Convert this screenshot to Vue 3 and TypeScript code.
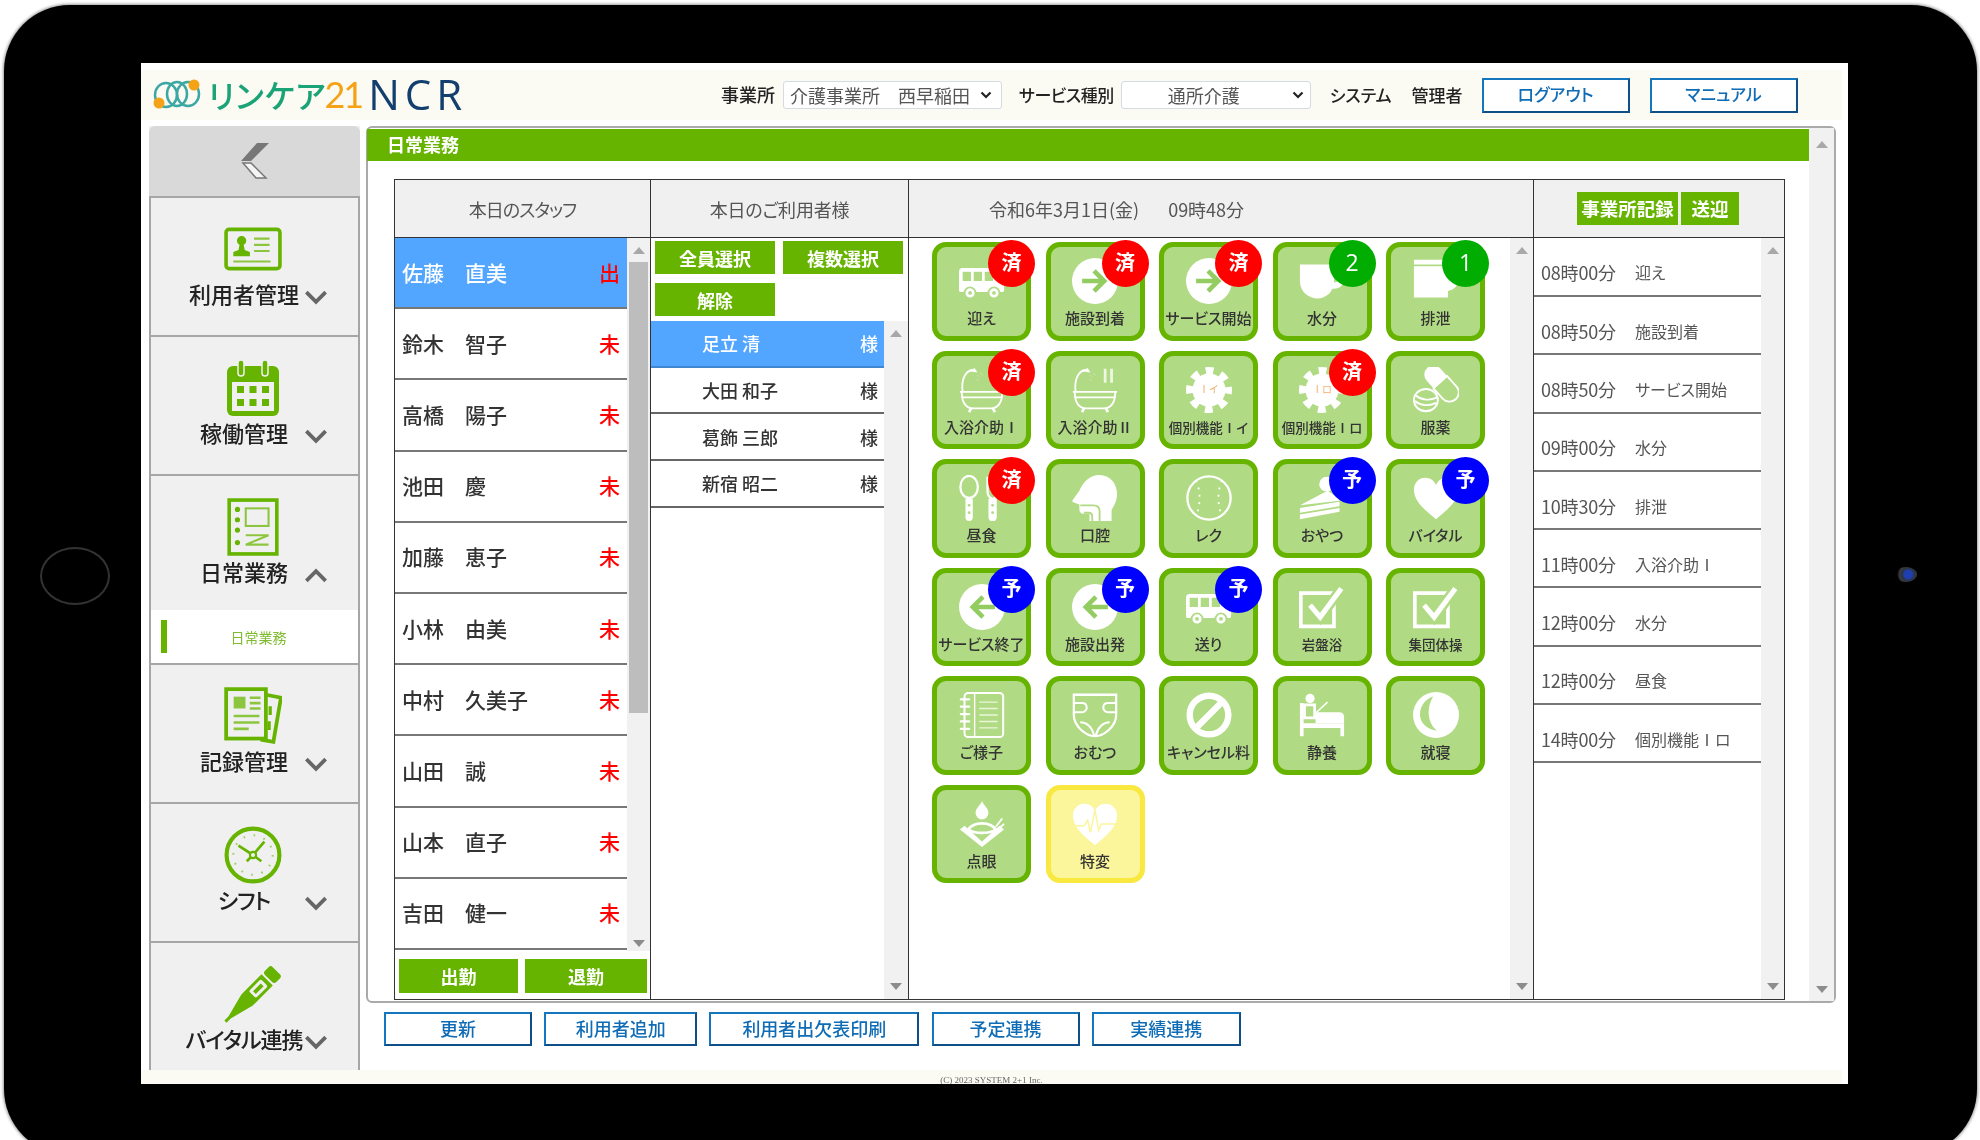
<script setup lang="ts">
type BadgeKind = 'done' | 'count' | 'plan'

interface Tile {
  label: string
  icon: string
  badge?: string
  kind?: BadgeKind
  small?: boolean
  alert?: boolean
  tag?: string
}

const navItems = [
  { label: '利用者管理', icon: 'nav-card' },
  { label: '稼働管理', icon: 'nav-cal' },
  { label: '日常業務', icon: 'nav-daily', open: true },
  { label: '記録管理', icon: 'nav-rec' },
  { label: 'シフト', icon: 'nav-clock', tight: true },
  { label: 'バイタル連携', icon: 'nav-temp', tight: true }
]

const staff = [
  { name: '佐藤　直美', mark: '出', active: true },
  { name: '鈴木　智子', mark: '未' },
  { name: '高橋　陽子', mark: '未' },
  { name: '池田　慶', mark: '未' },
  { name: '加藤　恵子', mark: '未' },
  { name: '小林　由美', mark: '未' },
  { name: '中村　久美子', mark: '未' },
  { name: '山田　誠', mark: '未' },
  { name: '山本　直子', mark: '未' },
  { name: '吉田　健一', mark: '未' }
]

const users = ['足立 清', '大田 和子', '葛飾 三郎', '新宿 昭二']

const tiles: Tile[] = [
  { label: '迎え', icon: 'bus', badge: '済', kind: 'done' },
  { label: '施設到着', icon: 'arrow-r', badge: '済', kind: 'done' },
  { label: 'サービス開始', icon: 'arrow-r', badge: '済', kind: 'done' },
  { label: '水分', icon: 'cup', badge: '2', kind: 'count' },
  { label: '排泄', icon: 'toilet', badge: '1', kind: 'count' },
  { label: '入浴介助Ⅰ', icon: 'bath', badge: '済', kind: 'done' },
  { label: '入浴介助Ⅱ', icon: 'bath2' },
  { label: '個別機能Ⅰイ', icon: 'gear', small: true, tag: 'Ⅰイ' },
  { label: '個別機能Ⅰロ', icon: 'gear', badge: '済', kind: 'done', small: true, tag: 'Ⅰロ' },
  { label: '服薬', icon: 'pills' },
  { label: '昼食', icon: 'meal', badge: '済', kind: 'done' },
  { label: '口腔', icon: 'mouth' },
  { label: 'レク', icon: 'ball' },
  { label: 'おやつ', icon: 'cake', badge: '予', kind: 'plan' },
  { label: 'バイタル', icon: 'heart', badge: '予', kind: 'plan' },
  { label: 'サービス終了', icon: 'arrow-l', badge: '予', kind: 'plan' },
  { label: '施設出発', icon: 'arrow-l', badge: '予', kind: 'plan' },
  { label: '送り', icon: 'bus', badge: '予', kind: 'plan' },
  { label: '岩盤浴', icon: 'check', small: true },
  { label: '集団体操', icon: 'check', small: true },
  { label: 'ご様子', icon: 'note' },
  { label: 'おむつ', icon: 'diaper' },
  { label: 'キャンセル料', icon: 'cancel' },
  { label: '静養', icon: 'bed' },
  { label: '就寝', icon: 'moon' },
  { label: '点眼', icon: 'eye' },
  { label: '特変', icon: 'pulse', alert: true }
]

const timeline = [
  ['08時00分', '迎え'],
  ['08時50分', '施設到着'],
  ['08時50分', 'サービス開始'],
  ['09時00分', '水分'],
  ['10時30分', '排泄'],
  ['11時00分', '入浴介助Ⅰ'],
  ['12時00分', '水分'],
  ['12時00分', '昼食'],
  ['14時00分', '個別機能Ⅰロ']
]

const actions = [
  { label: '更新', width: 148 },
  { label: '利用者追加', width: 153 },
  { label: '利用者出欠表印刷', width: 210 },
  { label: '予定連携', width: 148 },
  { label: '実績連携', width: 149 }
]
</script>

<template>
  <div class="page">
    <svg class="defs" width="0" height="0" aria-hidden="true">
      <!-- side menu -->
      <symbol id="nav-card" viewBox="0 0 56 42">
        <rect x="2" y="2" width="52" height="38" rx="3" fill="none" stroke="#66b400" stroke-width="3.5" />
        <circle cx="17" cy="13" r="4.5" fill="#66b400" />
        <path d="M15 17h4l1 5 5 2v4H9v-4l5-2z" fill="#66b400" />
        <path d="M29 11h15M29 17h15M29 23h15M9 33h36" stroke="#8cc63f" stroke-width="2" />
      </symbol>
      <symbol id="nav-cal" viewBox="0 0 54 58">
        <rect x="1" y="7" width="52" height="50" rx="6" fill="#66b400" />
        <rect x="6" y="23" width="42" height="29" fill="#f0f0f0" />
        <rect x="12" y="1" width="6" height="16" rx="3" fill="#66b400" stroke="#f0f0f0" stroke-width="1.5" />
        <rect x="36" y="1" width="6" height="16" rx="3" fill="#66b400" stroke="#f0f0f0" stroke-width="1.5" />
        <g fill="#66b400">
          <rect x="11" y="27" width="7" height="7" /><rect x="23.5" y="27" width="7" height="7" /><rect x="36" y="27" width="7" height="7" />
          <rect x="11" y="40" width="7" height="7" /><rect x="23.5" y="40" width="7" height="7" /><rect x="36" y="40" width="7" height="7" />
        </g>
      </symbol>
      <symbol id="nav-daily" viewBox="0 0 50 56">
        <rect x="2" y="2" width="46" height="52" fill="none" stroke="#66b400" stroke-width="3.5" />
        <g fill="#66b400"><circle cx="10" cy="11" r="2.5" /><circle cx="10" cy="21" r="2.5" /><circle cx="10" cy="31" r="2.5" /><circle cx="10" cy="43" r="2.5" /></g>
        <rect x="18" y="10" width="22" height="17" fill="none" stroke="#8cc63f" stroke-width="2" />
        <path d="M18 36h22L18 45h22" fill="none" stroke="#8cc63f" stroke-width="2" />
      </symbol>
      <symbol id="nav-rec" viewBox="0 0 54 54">
        <path d="M38 7l15 3-7 41-12-2" fill="none" stroke="#66b400" stroke-width="3.5" />
        <rect x="2" y="2" width="37" height="46" fill="#f0f0f0" stroke="#66b400" stroke-width="3.5" />
        <path d="M9 9h11v11H9z" fill="#8cc63f" />
        <path d="M24 10h10M24 15h10M24 20h10M9 27h24M9 33h24M9 39h14" stroke="#8cc63f" stroke-width="2.4" />
        <path d="M43 18v8M42 32v8" stroke="#66b400" stroke-width="3" />
      </symbol>
      <symbol id="nav-clock" viewBox="0 0 56 56">
        <circle cx="28" cy="28" r="25.5" fill="none" stroke="#66b400" stroke-width="4" />
        <circle cx="28" cy="28" r="19" fill="none" stroke="#9ccf5c" stroke-width="2" stroke-dasharray="1.6 8.35" />
        <path d="M28 28L14 19M28 28l11-13M28 28l-6 6M28 28l8 6" stroke="#66b400" stroke-width="2.6" />
        <circle cx="28" cy="28" r="3" fill="#f0f0f0" stroke="#66b400" stroke-width="2" />
      </symbol>
      <symbol id="nav-temp" viewBox="0 0 58 58">
        <g transform="rotate(-45 29 29)">
          <path d="M-10 27.500h6L17 22c3-1 4-1 7-1h25v16H24c-3 0-4 0-7-1L-4 30.500h-6z" fill="#66b400" />
          <rect x="51" y="21" width="11" height="16" rx="3" fill="#66b400" />
          <rect x="28" y="24" width="17" height="10" rx="2" fill="#f0f0f0" />
          <rect x="31" y="27" width="11" height="4" fill="#66b400" />
        </g>
      </symbol>

      <!-- task tiles -->
      <symbol id="bus" viewBox="0 0 50 50">
        <path d="M4 11h28c6 0 11 9 15 14l2 3v7a2 2 0 0 1-2 2H2a2 2 0 0 1-2-2V15a4 4 0 0 1 4-4z" fill="#fff" />
        <g fill="#b0da83"><rect x="4" y="15" width="9" height="10" /><rect x="16" y="15" width="9" height="10" /><rect x="28" y="15" width="9" height="10" /></g>
        <circle cx="12" cy="38" r="6" fill="#fff" stroke="#b0da83" stroke-width="2" /><circle cx="12" cy="38" r="2" fill="#b0da83" />
        <circle cx="38" cy="38" r="6" fill="#fff" stroke="#b0da83" stroke-width="2" /><circle cx="38" cy="38" r="2" fill="#b0da83" />
      </symbol>
      <symbol id="arrow-r" viewBox="0 0 50 50">
        <circle cx="25" cy="25" r="25" fill="#fff" />
        <path d="M11 25h24M24 14l11 11-11 11" fill="none" stroke="#93cc60" stroke-width="5" />
      </symbol>
      <symbol id="arrow-l" viewBox="0 0 50 50">
        <circle cx="25" cy="25" r="25" fill="#fff" />
        <path d="M39 25H15M26 14L15 25l11 11" fill="none" stroke="#93cc60" stroke-width="5" />
      </symbol>
      <symbol id="cup" viewBox="0 0 50 50">
        <path d="M1 7h37v18c0 12-9 19-18 19S1 37 1 25z" fill="#fff" />
        <path d="M36 26c6 1 11-1 14-5l-3 8c-2 4-8 5-13 4z" fill="#fff" />
      </symbol>
      <symbol id="toilet" viewBox="0 0 50 50">
        <path d="M1 2h38v5H1zM1 9h38v13h11c0 8-5 12-12 14v7H1z" fill="#fff" />
      </symbol>
      <symbol id="bath" viewBox="0 0 50 50">
        <g fill="none" stroke="#fff" stroke-width="2">
          <path d="M4 27C2 14 7 4 15 3" />
          <path d="M1 27h48M3 33h44" />
          <path d="M3 27c0 14 6 18 13 18h18c7 0 13-4 13-18" />
          <path d="M13 45l-2 4M37 45l2 4" stroke-width="3" />
        </g>
        <path d="M12 5l5-4 3 5z" fill="#fff" />
        <path d="M20 9l3 3M23 7l3 2M19 13l3 3" stroke="#dff0cc" stroke-width="1" stroke-dasharray="1 1" />
      </symbol>
      <symbol id="bath2" viewBox="0 0 50 50">
        <use href="#bath" width="50" height="50" />
        <path d="M36 2v15M43 2v15" stroke="#eef7e2" stroke-width="3" />
      </symbol>
      <symbol id="gear" viewBox="0 0 50 50">
        <circle cx="25" cy="25" r="18" fill="#fff" />
        <circle cx="25" cy="25" r="21" fill="none" stroke="#fff" stroke-width="8" stroke-dasharray="8.500 7.993" stroke-dashoffset="4.250" />
      </symbol>
      <symbol id="pills" viewBox="0 0 50 50">
        <g transform="rotate(-42 31 18)">
          <path d="M21 5a10 10 0 0 1 20 0v11H21z" fill="#fff" />
          <path d="M21 16h20v15a10 10 0 0 1-20 0z" fill="none" stroke="#fff" stroke-width="2" />
        </g>
        <ellipse cx="14" cy="36" rx="13" ry="12" fill="#b0da83" stroke="#fff" stroke-width="2.200" />
        <path d="M3 31c6 5 16 6 23 2M2 37c6 5 16 6 23 2" fill="none" stroke="#fff" stroke-width="2" />
      </symbol>
      <symbol id="meal" viewBox="0 0 50 50">
        <ellipse cx="11" cy="13" rx="9.500" ry="12" fill="none" stroke="#fff" stroke-width="2.500" />
        <path d="M7 26h8v20a4 4 0 0 1-8 0z" fill="#fff" />
        <circle cx="11" cy="33" r="1.500" fill="#b0da83" /><circle cx="11" cy="41" r="1.500" fill="#b0da83" />
        <path d="M31 2v16c0 5 3 7 5 8h1c2-1 5-3 5-8V2" fill="none" stroke="#fff" stroke-width="2.500" />
        <path d="M32 26h9v20a4.500 4.500 0 0 1-9 0z" fill="#fff" />
        <circle cx="36.500" cy="33" r="1.500" fill="#b0da83" /><circle cx="36.500" cy="41" r="1.500" fill="#b0da83" />
      </symbol>
      <symbol id="mouth" viewBox="0 0 50 50">
        <path d="M30 0c11 0 19 9 19 21 0 7-3 12-6 17v12H19v-8h-7c-3 0-4-2-4-5v-5l-6-2c-2-1-2-2-1-3l7-10C12 8 19 0 30 0z" fill="#fff" />
        <path d="M9 33h14c5 0 7 2 7 6v11M13 41h5c3 0 4 2 4 4v5" fill="none" stroke="#b0da83" stroke-width="2" />
      </symbol>
      <symbol id="ball" viewBox="0 0 50 50">
        <circle cx="25" cy="25" r="23.500" fill="none" stroke="#fff" stroke-width="2.500" />
        <path d="M11 6c5 11 5 27 0 38M39 6c-5 11-5 27 0 38" fill="none" stroke="#fff" stroke-width="2" stroke-dasharray="2 6" />
      </symbol>
      <symbol id="cake" viewBox="0 0 50 50">
        <circle cx="30" cy="10" r="8" fill="#fff" />
        <path d="M1 33L31 17l14 9-1 2z" fill="#fff" />
        <path d="M1 36l43-7v5L1 41z" fill="#fff" />
        <path d="M1 43l43-7v4L1 48z" fill="#fff" />
      </symbol>
      <symbol id="heart" viewBox="0 0 50 50">
        <path d="M25 48C14 39 1 29 1 16 1 8 7 3 13 3c6 0 10 3 12 8 2-5 6-8 12-8 6 0 12 5 12 13 0 13-13 23-24 32z" fill="#fff" />
      </symbol>
      <symbol id="pulse" viewBox="0 0 50 50">
        <use href="#heart" width="50" height="50" />
        <path d="M0 27h13l4-6 3 13 5-24 4 22 3-7h18" fill="none" stroke="#fbf59b" stroke-width="1.600" />
      </symbol>
      <symbol id="check" viewBox="0 0 50 50">
        <path d="M2 10h36v36H2z" fill="none" stroke="#fff" stroke-width="4" />
        <path d="M12 23l11 13L46 5" fill="none" stroke="#b0da83" stroke-width="11" />
        <path d="M12 23l11 13L46 5" fill="none" stroke="#fff" stroke-width="5.500" />
      </symbol>
      <symbol id="note" viewBox="0 0 50 50">
        <rect x="6" y="1" width="42" height="48" rx="4" fill="none" stroke="#fff" stroke-width="2.200" />
        <path d="M17 2v46" stroke="#fff" stroke-width="1.500" />
        <path d="M22 11h20M22 18h20M22 25h20M22 32h20M22 39h20" stroke="#eaf6dc" stroke-width="1.500" />
        <path d="M2 8h9M2 16h9M2 24h9M2 32h9M2 40h9" stroke="#fff" stroke-width="2.500" stroke-linecap="round" />
      </symbol>
      <symbol id="diaper" viewBox="0 0 50 50">
        <path d="M2 3h46v22c0 12-13 23-23 23S2 37 2 25z" fill="none" stroke="#fff" stroke-width="2.500" />
        <path d="M2 12h9c4 0 5 3 5 5s-2 5-5 5H2M48 12h-9c-4 0-5 3-5 5s2 5 5 5h9" fill="none" stroke="#fff" stroke-width="2.200" />
        <path d="M9 33c7 0 13 5 15 14M41 33c-7 0-13 5-15 14" fill="none" stroke="#fff" stroke-width="2.200" />
      </symbol>
      <symbol id="cancel" viewBox="0 0 50 50">
        <circle cx="25" cy="25" r="21" fill="none" stroke="#fff" stroke-width="7" />
        <path d="M12 38L38 12" stroke="#fff" stroke-width="7" />
      </symbol>
      <symbol id="bed" viewBox="0 0 50 50">
        <circle cx="12" cy="7" r="5" fill="#fff" />
        <path d="M6 14h11v14H6z" fill="none" stroke="#fff" stroke-width="3" />
        <path d="M17 24l14-13" stroke="#fff" stroke-width="1.500" />
        <path d="M18 22h26c3 0 5 2 5 5v7H18z" fill="#fff" />
        <path d="M1 12h4v36H1zM5 34h44v14h-4v-9H5z" fill="#fff" />
      </symbol>
      <symbol id="moon" viewBox="0 0 50 50">
        <circle cx="25" cy="25" r="25" fill="#fff" />
        <path d="M22 5C12 8 6 18 8 28c2 8 9 13 18 14-10-8-12-24-4-37z" fill="#b0da83" />
      </symbol>
      <symbol id="eye" viewBox="0 0 50 50">
        <path d="M25 0c2 5 7 8 7 13a7 7 0 0 1-14 0c0-5 5-8 7-13z" fill="#fff" />
        <path d="M1 31l5-4 19 17 19-17 5 4-24 19z" fill="#fff" />
        <path d="M10 31c6-9 24-9 30 0-6 5-24 5-30 0z" fill="none" stroke="#fff" stroke-width="3" />
        <path d="M40 28l7-9M43 30l6-5" stroke="#fff" stroke-width="2" />
      </symbol>
    </svg>

    <div class="tablet">
      <span class="home"></span>
      <span class="camera"></span>

      <div class="screen">
        <header class="topbar">
          <div class="logo">
            <svg class="logo-mark" viewBox="0 0 48 30" width="48" height="30">
              <g fill="none" stroke="#3ba8a3" stroke-width="2.500">
                <ellipse cx="13" cy="16" rx="11" ry="12" />
                <ellipse cx="24" cy="15" rx="10" ry="12" />
                <ellipse cx="35" cy="15" rx="11" ry="12" />
              </g>
              <circle cx="6" cy="24" r="5.500" fill="#f5a316" />
              <circle cx="41" cy="6" r="5.500" fill="#f5a316" />
            </svg>
            <span class="logo-jp">リンケア</span>
            <span class="logo-num">21</span>
            <span class="logo-ncr">NCR</span>
          </div>
          <span class="hd-label first">事業所</span>
          <label class="select-wrap office">
            <select class="hd-select"><option>介護事業所　西早稲田</option></select>
            <svg viewBox="0 0 12 8" width="12" height="8"><path d="M1.500 1.500L6 6l4.500-4.500" fill="none" stroke="#222" stroke-width="2.200" /></svg>
          </label>
          <span class="hd-label narrow">サービス種別</span>
          <label class="select-wrap kind">
            <select class="hd-select"><option>通所介護</option></select>
            <svg viewBox="0 0 12 8" width="12" height="8"><path d="M1.500 1.500L6 6l4.500-4.500" fill="none" stroke="#222" stroke-width="2.200" /></svg>
          </label>
          <span class="hd-user">システム</span>
          <span class="hd-user">管理者</span>
          <button class="link-btn logout">ログアウト</button>
          <button class="link-btn logout">マニュアル</button>
        </header>

        <div class="body">
          <aside class="side">
            <div class="collapse">
              <svg viewBox="0 0 28 36" width="28" height="36">
                <path d="M28 0H16L0 18h10z" fill="#777" />
                <path d="M2 20h8l15 15H15z" fill="#f4f4f4" stroke="#777" stroke-width="1.500" />
              </svg>
            </div>
            <template v-for="item in navItems" :key="item.label">
              <div class="nav-item" :class="{ open: item.open }">
                <div class="nav-icon"><svg><use :href="`#${item.icon}`" /></svg></div>
                <div class="nav-label" :class="{ tight: item.tight }">
                  {{ item.label }}
                  <svg class="chev" :class="{ up: item.open }" viewBox="0 0 22 14" width="24" height="15">
                    <path d="M2 2l9 9 9-9" fill="none" stroke="#666" stroke-width="3.500" />
                  </svg>
                </div>
              </div>
              <div v-if="item.open" class="sub-item"><i></i><span>日常業務</span></div>
            </template>
          </aside>

          <div class="main">
            <section class="panel">
              <div class="panel-inner">
                <h1 class="title">日常業務</h1>
                <div class="board">
                  <div class="col-head staff-head">本日のスタッフ</div>
                  <div class="col-head">本日のご利用者様</div>
                  <div class="col-head date">令和6年3月1日(金)<span>09時48分</span></div>
                  <div class="col-head tools">
                    <button class="green-btn">事業所記録</button>
                    <button class="green-btn">送迎</button>
                  </div>

                  <div class="cell staff-cell">
                    <div class="scroll-wrap staff-wrap">
                      <ul class="rows">
                        <li v-for="s in staff" :key="s.name" class="staff-row" :class="{ active: s.active }">
                          <span>{{ s.name }}</span><b>{{ s.mark }}</b>
                        </li>
                      </ul>
                      <div class="sb staff-sb"><i class="up"></i><em class="thumb"></em><i class="down"></i></div>
                    </div>
                    <div class="staff-btns">
                      <button class="green-btn">出勤</button>
                      <button class="green-btn">退勤</button>
                    </div>
                  </div>

                  <div class="cell user-cell">
                    <div class="user-btns">
                      <button class="green-btn">全員選択</button>
                      <button class="green-btn">複数選択</button>
                      <button class="green-btn">解除</button>
                    </div>
                    <div class="scroll-wrap user-wrap">
                      <ul class="rows">
                        <li v-for="(u, i) in users" :key="u" class="user-row" :class="{ active: i === 0 }">
                          <span>{{ u }}</span><span>様</span>
                        </li>
                      </ul>
                      <div class="sb user-sb"><i class="up"></i><i class="down"></i></div>
                    </div>
                  </div>

                  <div class="cell tile-cell">
                    <div class="tiles">
                      <div v-for="t in tiles" :key="t.label" class="tile" :class="{ alert: t.alert }">
                        <svg class="tile-icon"><use :href="`#${t.icon}`" /></svg>
                        <span v-if="t.tag" class="gear-tag">{{ t.tag }}</span>
                        <span class="tile-label" :class="{ small: t.small }">{{ t.label }}</span>
                        <span v-if="t.badge" class="badge" :class="t.kind">{{ t.badge }}</span>
                      </div>
                    </div>
                    <div class="sb"><i class="up"></i><i class="down"></i></div>
                  </div>

                  <div class="cell log-cell">
                    <ul class="rows">
                      <li v-for="(row, i) in timeline" :key="i" class="log-row">
                        <span class="log-time">{{ row[0] }}</span><span>{{ row[1] }}</span>
                      </li>
                    </ul>
                    <div class="sb"><i class="up"></i><i class="down"></i></div>
                  </div>
                </div>
              </div>
              <div class="sb panel-sb"><i class="up"></i><i class="down"></i></div>
            </section>

            <div class="actions">
              <button v-for="a in actions" :key="a.label" class="link-btn" :style="{ width: a.width + 'px' }">{{ a.label }}</button>
            </div>
          </div>
        </div>

        <footer class="foot">(C) 2023 SYSTEM 2+1 Inc.</footer>
      </div>
    </div>
  </div>
</template>

<style>
html,
body {
  margin: 0;
  background: #fff;
}
</style>

<style scoped>
.page {
  width: 1980px;
  height: 1140px;
  overflow: hidden;
  background: #fff;
  font-family: "Noto Sans CJK JP", "Noto Sans", sans-serif;
  font-feature-settings: "palt";
  color: #333;
}

.defs {
  position: absolute;
}

.tablet {
  position: relative;
  box-sizing: border-box;
  width: 1973px;
  height: 1150px;
  margin: 5px 0 0 4px;
  padding: 58px 0 0 137px;
  background: #000;
  border-radius: 66px;
  box-shadow: 0 0 3px 1px #999;
}

.home {
  position: absolute;
  left: 36px;
  top: 542px;
  width: 66px;
  height: 54px;
  border: 2px solid #333;
  border-radius: 50%;
}

.camera {
  position: absolute;
  left: 1891px;
  top: 562px;
  width: 22px;
  height: 15px;
  border-radius: 50%;
  background: radial-gradient(circle at 60% 50%, #1f3fb0 0 4px, #2b3445 6px, #3a3a3a 9px, #000 11px);
}

.screen {
  display: flex;
  flex-direction: column;
  width: 1707px;
  height: 1021px;
  background: #fff;
  filter: blur(0.5px);
}

.topbar {
  display: flex;
  align-items: center;
  box-sizing: border-box;
  width: 1701px;
  height: 50px;
  margin-top: 7px;
  padding-left: 12px;
  background: #fbfaf3;
}

.logo {
  display: flex;
  align-items: center;
  width: 330px;
  height: 40px;
  margin-top: -3px;
}

.logo-mark {
  flex: none;
}

.logo-jp {
  margin-left: 7px;
  font-size: 32px;
  font-weight: 500;
  color: #1aa377;
  letter-spacing: 1px;
}

.logo-num {
  margin-left: -2px;
  font-family: Lato, sans-serif;
  font-size: 36px;
  font-weight: 400;
  letter-spacing: -2px;
  color: #f5a316;
}

.logo-ncr {
  margin-left: 6px;
  font-family: "Open Sans", sans-serif;
  font-size: 42px;
  font-weight: 500;
  line-height: 40px;
  letter-spacing: 5px;
  color: #123f6d;
}

.hd-label,
.hd-user {
  font-size: 18px;
  font-weight: 500;
  color: #222;
  white-space: nowrap;
  margin-top: -2px;
}

.hd-label.first {
  margin-left: 238px;
}

.hd-label.narrow {
  font-size: 17px;
  letter-spacing: -0.5px;
}

.select-wrap {
  position: relative;
  display: block;
  box-sizing: border-box;
  height: 28px;
  margin: 0 0 0 8px;
}

.select-wrap svg {
  position: absolute;
  top: 10px;
  pointer-events: none;
}

.select-wrap.office {
  width: 219px;
  margin-right: 17px;
}

.select-wrap.office svg {
  right: 10px;
}

.select-wrap.office .hd-select {
  padding-left: 6px;
}

.select-wrap.kind {
  width: 190px;
  margin-left: 7px;
}

.select-wrap.kind svg {
  right: 7px;
}

.select-wrap.kind .hd-select {
  padding-left: 46px;
}

.hd-select {
  display: block;
  box-sizing: border-box;
  width: 100%;
  height: 28px;
  padding: 0 0 2px;
  appearance: none;
  border: 1px solid #d5dbe3;
  border-radius: 3px;
  background: #fff;
  font: 400 18px "Noto Sans CJK JP", sans-serif;
  font-feature-settings: "palt";
  color: #555;
}

.hd-user {
  margin-left: 19px;
  font-size: 17px;
}

.hd-user + .hd-user {
  margin-left: 20px;
}

.link-btn {
  box-sizing: border-box;
  height: 34px;
  padding: 0 0 3px;
  border: 2px solid #1477be;
  border-right-color: #0d4f86;
  border-bottom-color: #0d4f86;
  background: #fff;
  font: 500 18px "Noto Sans CJK JP", sans-serif;
  font-feature-settings: "palt";
  color: #0f6cb5;
}

.logout {
  width: 148px;
  height: 35px;
  margin-left: 20px;
  font-size: 17px;
}

.hd-user + .logout {
  margin-left: 19px;
}

.body {
  display: flex;
  gap: 6px;
  flex: 1;
  min-height: 0;
  margin-top: 6px;
  padding-left: 8px;
}

.side {
  flex: none;
  box-sizing: border-box;
  width: 211px;
  background: #f0f0f0;
}

.collapse {
  display: flex;
  align-items: center;
  justify-content: center;
  height: 70px;
  background: #d9d9d9;
  border-radius: 6px 6px 0 0;
}

.nav-item {
  box-sizing: border-box;
  height: 139px;
  padding-top: 21px;
  border: 2px solid #a6a6a6;
  border-bottom: 0;
}

.nav-item.open {
  height: 136px;
}

.nav-icon {
  display: flex;
  justify-content: center;
  align-items: center;
  height: 60px;
  margin-left: -4px;
}

.nav-icon svg {
  width: 58px;
  height: 58px;
}

.nav-label {
  position: relative;
  margin: 0 0 0 1px;
  font-size: 22px;
  font-weight: 500;
  line-height: 28px;
  text-align: center;
  color: #222;
  white-space: nowrap;
  padding-right: 22px;
}

.nav-label.tight {
  letter-spacing: -1px;
}

.chev {
  position: absolute;
  right: 30px;
  top: 11px;
}

.chev.up {
  transform: scaleY(-1);
}

.sub-item {
  display: flex;
  align-items: center;
  box-sizing: border-box;
  height: 53px;
  border: 2px solid #a6a6a6;
  border-width: 0 2px;
  background: #fff;
}

.sub-item i {
  width: 6px;
  height: 33px;
  margin-left: 10px;
  background: #66b400;
}

.sub-item span {
  flex: 1;
  margin-right: 8px;
  font-size: 14px;
  text-align: center;
  color: #7fbd2f;
}

.main {
  flex: none;
  width: 1470px;
}

.panel {
  display: flex;
  box-sizing: border-box;
  height: 877px;
  border: 2px solid #aaa;
  border-radius: 6px;
}

.panel-inner {
  flex: 1;
  min-width: 0;
}

.title {
  box-sizing: border-box;
  height: 32px;
  margin: 1px 0 0 -1px;
  padding-left: 20px;
  background: #66b400;
  font-size: 18px;
  font-weight: 700;
  line-height: 30px;
  color: #fff;
}

.board {
  display: grid;
  grid-template-columns: 256px 258px 625px 1fr;
  grid-template-rows: 58px 1fr;
  box-sizing: border-box;
  width: 1391px;
  height: 821px;
  margin: 18px 0 0 26px;
  border: 1.5px solid #333;
}

.col-head {
  display: flex;
  align-items: center;
  justify-content: center;
  background: #f0f0f0;
  border-right: 1.5px solid #333;
  border-bottom: 1.5px solid #333;
  font-size: 18px;
  letter-spacing: -0.2px;
  color: #555;
}

.col-head.staff-head {
  letter-spacing: -1px;
}

.col-head.date {
  justify-content: flex-start;
  padding-left: 80px;
  letter-spacing: 0;
}

.col-head.date span {
  margin-left: 29px;
}

.col-head.tools {
  gap: 3px;
  border-right: 0;
  padding-right: 45px;
  justify-content: flex-end;
}

.tools .green-btn {
  width: 101px;
  height: 33px;
  font-size: 18.5px;
  letter-spacing: 0;
  padding-bottom: 2px;
}

.tools .green-btn + .green-btn {
  width: 58px;
}

.cell {
  display: flex;
  min-height: 0;
  border-right: 1.5px solid #333;
}

.cell:last-child {
  border-right: 0;
}

.green-btn {
  padding: 0;
  border: 0;
  background: #66b400;
  font: 700 18px "Noto Sans CJK JP", sans-serif;
  font-feature-settings: "palt";
  color: #fff;
}

.rows {
  flex: 1;
  min-width: 0;
  margin: 0;
  padding: 0;
  list-style: none;
  overflow: hidden;
}

.sb {
  display: flex;
  flex-direction: column;
  flex: none;
  width: 23px;
  padding: 9px 0 9px;
  box-sizing: border-box;
  background: #f1f1f1;
}

.sb i {
  flex: none;
  width: 0;
  height: 0;
  margin: 0 auto;
  border-left: 6px solid transparent;
  border-right: 6px solid transparent;
}

.sb .up {
  border-bottom: 7px solid #a8a8a8;
}

.sb .down {
  margin-top: auto;
  border-top: 7px solid #8c8c8c;
}

.sb .thumb {
  display: block;
  width: 19px;
  height: 451px;
  margin: 8px auto 0;
  background: #bdbdbd;
}

.staff-sb {
  padding-bottom: 4px;
}

.user-sb {
  width: 24px;
}

.panel-sb {
  width: 25px;
  padding: 13px 0 8px;
}

.staff-cell,
.user-cell {
  flex-direction: column;
}

.scroll-wrap {
  display: flex;
  min-height: 0;
}

.staff-wrap {
  height: 713px;
}

.staff-row {
  display: flex;
  align-items: center;
  justify-content: space-between;
  box-sizing: border-box;
  height: 71.2px;
  padding: 0 7px 2px 7px;
  border-bottom: 2px solid #777;
  font-size: 21px;
  font-weight: 500;
  color: #333;
}

.staff-row.active {
  background: #53a6ff;
  color: #fff;
}

.staff-row b {
  font-weight: 500;
  color: #f00;
}

.staff-btns {
  display: flex;
  gap: 7px;
  padding: 8px 3px 0 4px;
}

.staff-btns .green-btn {
  width: 119px;
  height: 34px;
}

.staff-btns .green-btn + .green-btn {
  width: 122px;
}

.user-btns {
  display: grid;
  grid-template-columns: 120px 120px;
  grid-auto-rows: 33px;
  gap: 9px 8px;
  box-sizing: border-box;
  height: 83px;
  padding: 3px 0 0 4px;
}

.user-wrap {
  flex: 1;
}

.user-row {
  display: flex;
  align-items: center;
  justify-content: space-between;
  box-sizing: border-box;
  height: 46.7px;
  padding: 0 6px 0 51px;
  border-bottom: 2px solid #666;
  font-size: 18px;
  font-weight: 500;
}

.user-row.active {
  background: #53a6ff;
  color: #fff;
  border-bottom-color: #4186d0;
}

.tile-cell {
  justify-content: space-between;
}

.tiles {
  display: grid;
  grid-template-columns: repeat(5, 99px);
  grid-auto-rows: 98.5px;
  gap: 10px 14.5px;
  align-content: start;
  padding: 4px 0 0 23px;
}

.tile {
  position: relative;
  display: flex;
  flex-direction: column;
  align-items: center;
  box-sizing: border-box;
  padding-top: 11px;
  border: 5px solid #66b400;
  border-radius: 14px;
  background: #b0da83;
}

.tile.alert {
  border-color: #f8e840;
  background: #fbf59b;
}

.tile-icon {
  flex: none;
  width: 46px;
  height: 46px;
}

.gear-tag {
  position: absolute;
  top: 25px;
  left: 0;
  right: 0;
  font-size: 10px;
  line-height: 16px;
  text-align: center;
  color: #f0b070;
}

.tile-label {
  margin-top: 4px;
  font-size: 15px;
  font-weight: 500;
  line-height: 20px;
  color: #333;
  white-space: nowrap;
}

.tile-label.small {
  font-size: 13.5px;
}

.badge {
  position: absolute;
  top: -7px;
  right: -9px;
  width: 47px;
  height: 47px;
  border-radius: 50%;
  font-size: 20px;
  font-weight: 700;
  line-height: 44px;
  text-align: center;
  color: #fff;
}

.badge.done {
  background: #f00;
}

.badge.count {
  background: #00ad00;
  font-family: "Open Sans", sans-serif;
  font-weight: 400;
  font-size: 23px;
}

.badge.plan {
  background: #00f;
}

.log-row {
  display: flex;
  align-items: center;
  box-sizing: border-box;
  height: 58.3px;
  padding: 11px 0 0 7px;
  border-bottom: 2px solid #777;
  font-size: 16px;
  color: #555;
}

.log-row:first-child {
  height: 59px;
}

.log-time {
  width: 94px;
  font-size: 18px;
  letter-spacing: -0.2px;
}

.actions {
  display: flex;
  gap: 12.2px;
  margin: 9px 0 0 18px;
}

.foot {
  flex: none;
  box-sizing: border-box;
  width: 1701px;
  height: 14px;
  padding-top: 3px;
  background: #fbfaf3;
  font-family: "Liberation Serif", serif;
  font-size: 9px;
  line-height: 14px;
  text-align: center;
  color: #666;
  overflow: hidden;
}
</style>
